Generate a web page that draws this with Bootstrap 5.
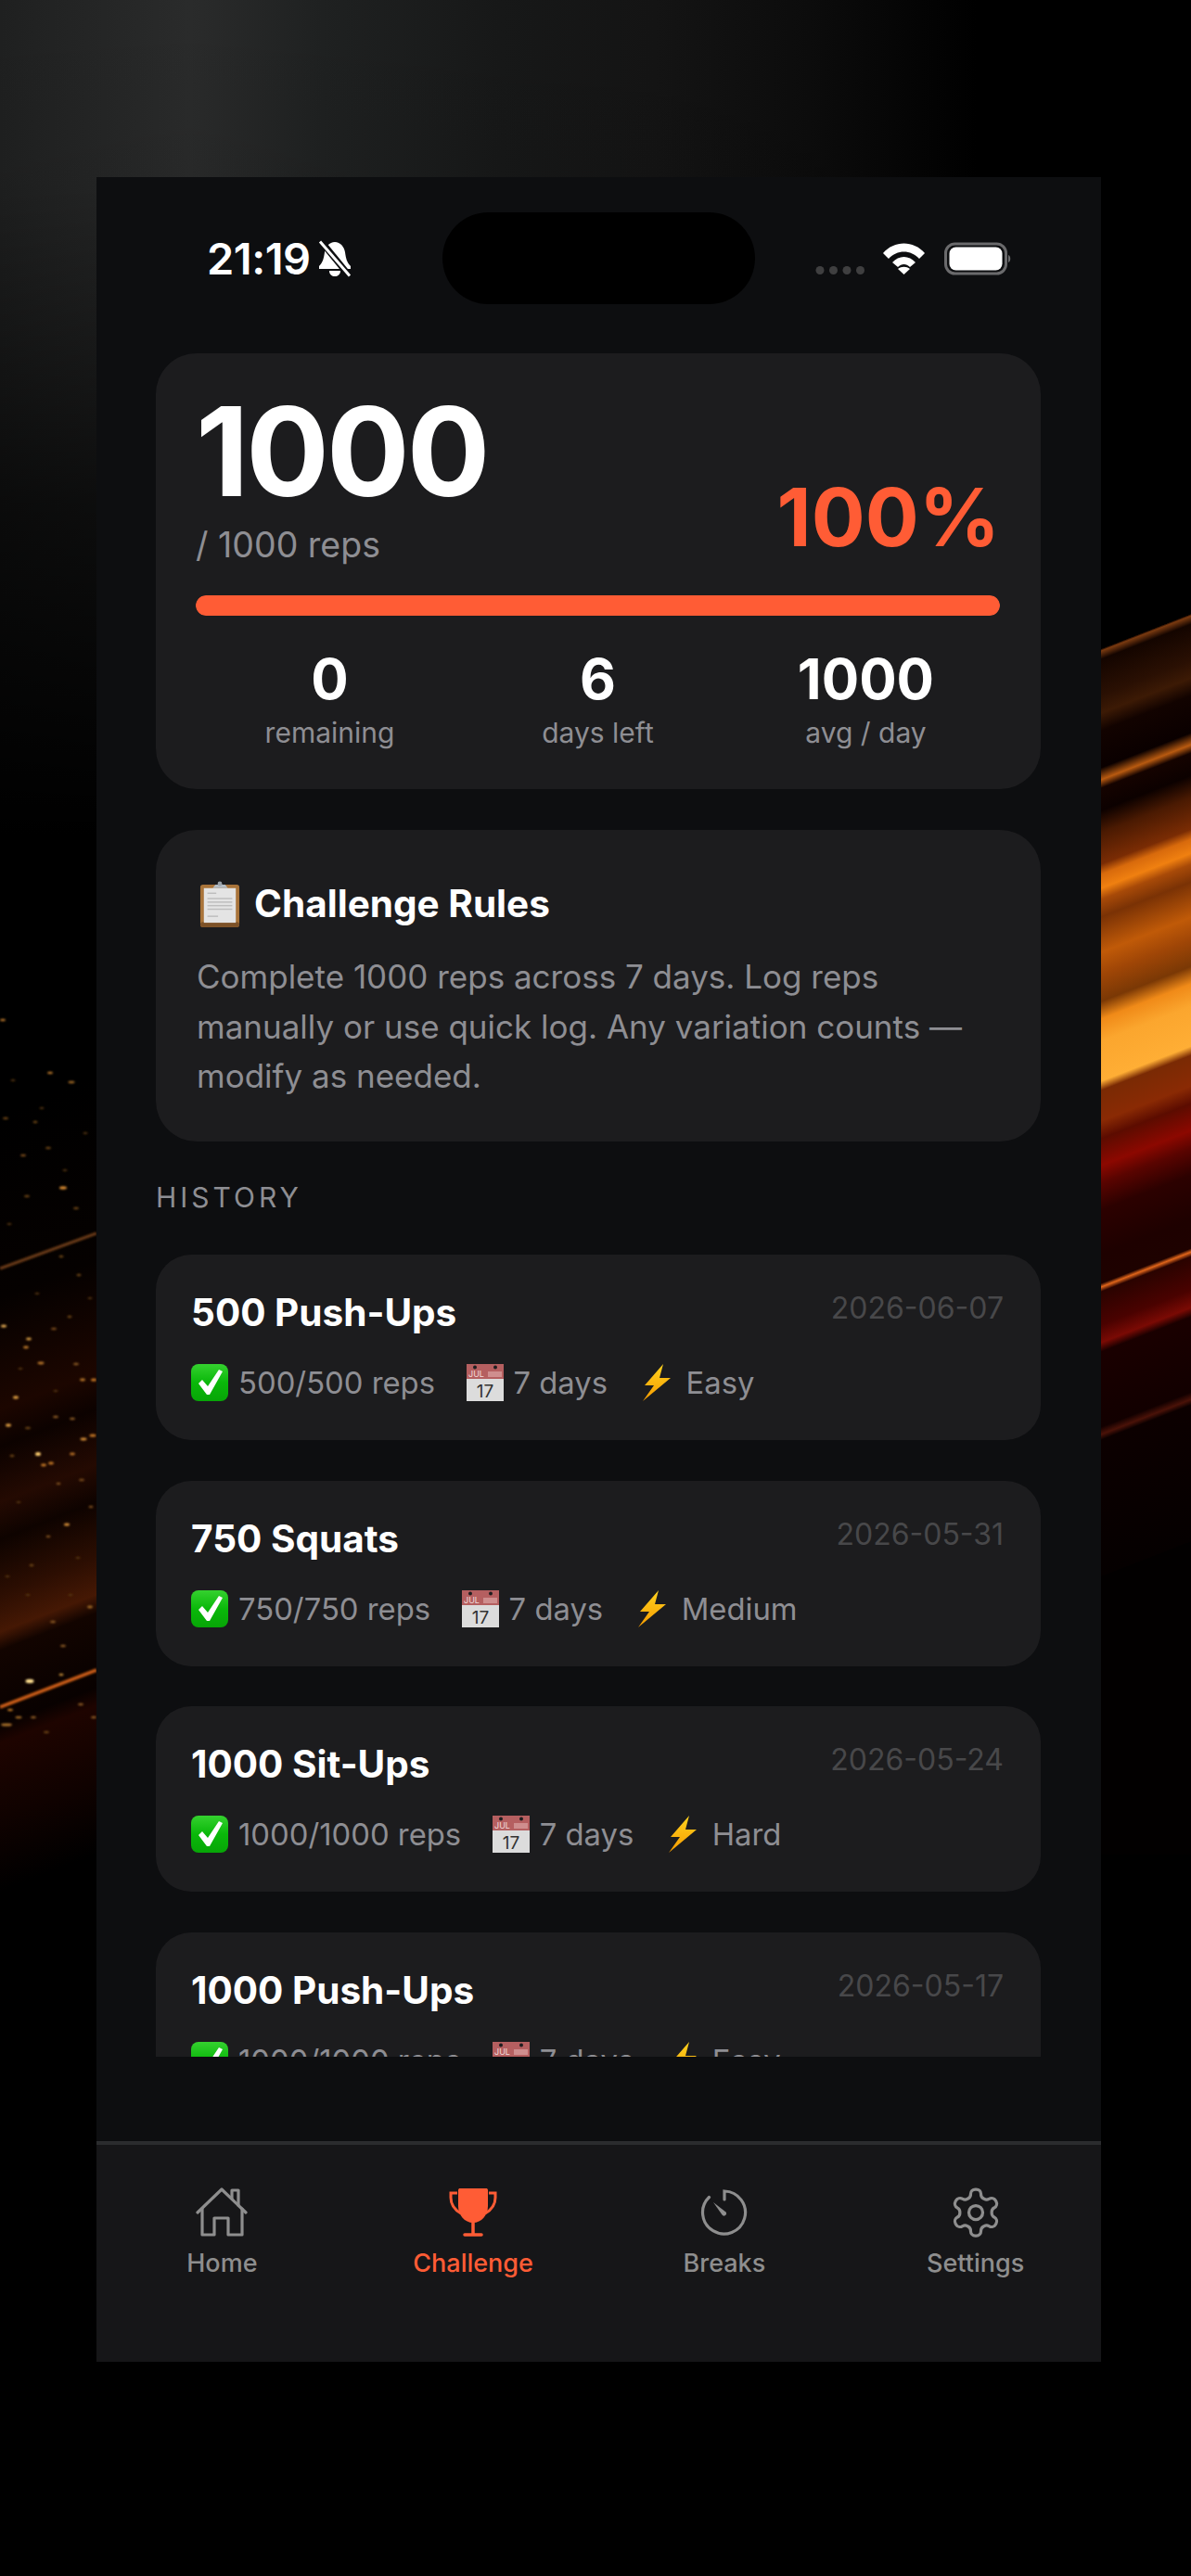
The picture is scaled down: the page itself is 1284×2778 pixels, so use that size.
<!doctype html>
<html lang="en">
<head>
<meta charset="utf-8">
<title>Challenge</title>
<link href="https://cdn.jsdelivr.net/npm/bootstrap@5.3.0/dist/css/bootstrap.min.css" rel="stylesheet">
<style>
html,body{margin:0;height:2778px;overflow:hidden;background:#000;}
body{font-family:"Inter","Liberation Sans",sans-serif;color:#fff;position:relative;}
.backdrop{position:absolute;left:0;top:0;width:1284px;height:2778px;z-index:0;}
.phone{position:relative;z-index:1;margin:191px 0 0 104px;width:1083px;height:2356px;background:#0d0e10;}
.statusbar{height:190px;padding:38px 95px 0 95px;align-items:flex-start;}
.status-side{flex:1 1 0;height:99px;}
.clock{font-size:47px;font-weight:600;line-height:1;letter-spacing:-.5px;margin-left:24px;}
.island{width:337px;height:99px;border-radius:50px;background:#000;flex:none;}
.scroller{height:1837px;overflow:hidden;padding:0 65px 0 64px;}
.tile{background:#1c1c1e;border:0;color:#fff;}
.tile-hero{height:470px;border-radius:44px;padding:39px 44px 0 43px;margin-bottom:44px;}
.tile-rules{height:336px;border-radius:44px;padding:44px 44px 0 44px;}
.tile-item{height:200px;border-radius:38px;padding:0 40px 0 38px;margin-bottom:43.5px;}
.big-count{font-size:133px;font-weight:700;line-height:1;letter-spacing:-3px;}
.count-sub{font-size:37.500px;line-height:1;color:#8e8e93;margin-top:16px;}
.pct{font-size:86px;font-weight:700;line-height:1;color:#ff5c35;margin-bottom:6px;}
.bar-track{height:22px;border-radius:11px;background:#2c2c2e;margin-top:35px;}
.bar-fill{background:#ff5c35;border-radius:11px;}
.stat-num{font-size:60px;font-weight:700;line-height:1;margin-top:38px;}
.stat-lab{font-size:30px;line-height:1;color:#8e8e93;margin-top:13px;}
.rules-title{font-size:40.500px;font-weight:700;line-height:72px;gap:15px;}
.rules-title svg{margin-left:3px;}
.rules-body{font-size:35px;line-height:53.600px;color:#8e8e93;margin:16px 0 0;}
.hist-label{font-size:30px;line-height:36px;letter-spacing:4px;color:#8e8e93;margin:42px 0 44px;}
.item-title{font-size:40.500px;font-weight:700;line-height:1;margin-top:43px;}
.item-date{font-size:32px;line-height:1;color:#48484a;margin-top:42px;}
.item-meta{font-size:32.800px;line-height:40px;color:#8e8e93;gap:33.500px;margin-top:34.500px;}
.emo{width:40px;height:40px;margin-right:11px;flex:none;display:block;}
.tabbar{height:238px;background:#161618;border-top:4px solid #2b2c2e;padding-top:43px;}
.tab-lab{font-size:27px;line-height:1;margin-top:11px;color:#8e8e8e;font-weight:500;}
.tab-on .tab-lab{color:#ff5c35;}
.tab-ic{width:60px;height:60px;display:block;margin:0 auto;}
</style>
</head>
<body>
<svg class="backdrop" viewBox="0 0 1284 2778" aria-hidden="true">
  <defs>
    <linearGradient id="topH" x1="0" x2="1284" y1="0" y2="0" gradientUnits="userSpaceOnUse">
      <stop offset="0" stop-color="#1f2020"/><stop offset=".16" stop-color="#2a2b2b"/><stop offset=".27" stop-color="#1f2121"/><stop offset=".42" stop-color="#171818"/><stop offset=".55" stop-color="#141414"/><stop offset=".68" stop-color="#0c0c0c"/><stop offset=".82" stop-color="#000"/>
    </linearGradient>
    <linearGradient id="topV" x1="0" x2="0" y1="0" y2="1">
      <stop offset="0" stop-color="#000" stop-opacity="0"/><stop offset=".22" stop-color="#000" stop-opacity=".05"/><stop offset=".6" stop-color="#000" stop-opacity=".65"/><stop offset="1" stop-color="#000" stop-opacity="1"/>
    </linearGradient>
    <linearGradient id="rightBands" gradientUnits="userSpaceOnUse" x1="1187" y1="700" x2="1525.5" y2="1568">
      <stop offset="-.2" stop-color="#000"/><stop offset="-.12" stop-color="#080100"/>
      <stop offset="0" stop-color="#180700"/><stop offset=".002" stop-color="#7a3a10"/><stop offset=".011" stop-color="#140500"/>
      <stop offset=".05" stop-color="#2a1003"/><stop offset=".069" stop-color="#3c1a05"/><stop offset=".088" stop-color="#120300"/>
      <stop offset=".128" stop-color="#0a0000"/><stop offset=".141" stop-color="#b85a10"/><stop offset=".15" stop-color="#150300"/>
      <stop offset=".174" stop-color="#0c0100"/><stop offset=".198" stop-color="#4a1a02"/><stop offset=".232" stop-color="#7a2c04"/>
      <stop offset=".243" stop-color="#d86a0c"/><stop offset=".258" stop-color="#f08010"/><stop offset=".27" stop-color="#a84a08"/>
      <stop offset=".289" stop-color="#7a3205"/><stop offset=".327" stop-color="#c05a08"/><stop offset=".351" stop-color="#a04606"/>
      <stop offset=".38" stop-color="#7a3805"/><stop offset=".399" stop-color="#f08a18"/><stop offset=".423" stop-color="#fba62e"/>
      <stop offset=".466" stop-color="#ffae35"/><stop offset=".476" stop-color="#7a2a04"/><stop offset=".509" stop-color="#8a2a04"/>
      <stop offset=".528" stop-color="#5c0c00"/><stop offset=".557" stop-color="#8c0800"/><stop offset=".576" stop-color="#5a0400"/>
      <stop offset=".605" stop-color="#2c0100"/><stop offset=".653" stop-color="#1e0100"/><stop offset=".684" stop-color="#1e0200"/>
      <stop offset=".688" stop-color="#e0651a"/><stop offset=".693" stop-color="#2a0300"/><stop offset=".729" stop-color="#4a0200"/>
      <stop offset=".748" stop-color="#7a0a04"/><stop offset=".758" stop-color="#1a0000"/><stop offset=".839" stop-color="#120000"/>
      <stop offset=".847" stop-color="#4a1208"/><stop offset=".853" stop-color="#0c0000"/><stop offset="1.1" stop-color="#050000"/><stop offset="1.3" stop-color="#020000"/>
    </linearGradient>
    <linearGradient id="leftBands" gradientUnits="userSpaceOnUse" x1="0" y1="1200" x2="338.500" y2="2068">
      <stop offset="0" stop-color="#000"/><stop offset=".2" stop-color="#050100"/><stop offset=".32" stop-color="#1c0600"/><stop offset=".36" stop-color="#0c0200"/>
      <stop offset=".42" stop-color="#240a02"/><stop offset=".46" stop-color="#0e0300"/><stop offset=".52" stop-color="#2c0e02"/>
      <stop offset=".56" stop-color="#451804"/><stop offset=".58" stop-color="#120400"/><stop offset=".66" stop-color="#080100"/>
      <stop offset=".68" stop-color="#1e0400"/><stop offset=".76" stop-color="#100200"/><stop offset=".84" stop-color="#000"/>
    </linearGradient>
    <filter id="soft" x="-20%" y="-20%" width="140%" height="140%"><feGaussianBlur stdDeviation=".9"/></filter>
  </defs>
  <rect x="0" y="0" width="1284" height="900" fill="url(#topH)"/>
  <rect x="0" y="0" width="1284" height="900" fill="url(#topV)"/>
  <rect x="1187" y="300" width="97" height="1700" fill="url(#rightBands)"/>
  <rect x="0" y="1100" width="104" height="1000" fill="url(#leftBands)"/>
  <g filter="url(#soft)">
    <line x1="0" y1="1368" x2="104" y2="1330" stroke="#6a3a18" stroke-width="3"/>
    <line x1="0" y1="1841" x2="104" y2="1801" stroke="#c85c16" stroke-width="3.500"/>
    <g fill="#b8762c">
      <ellipse cx="3" cy="1100" rx="3" ry="1.300"/><ellipse cx="54" cy="1157" rx="3" ry="1.300"/><ellipse cx="77" cy="1167" rx="3.500" ry="1.300" fill="#a06a28"/>
      <ellipse cx="68" cy="1281" rx="4" ry="1.700" fill="#d88a30"/><ellipse cx="29" cy="1290" rx="3" ry="1.300" fill="#6a4418"/><ellipse cx="52" cy="1238" rx="3" ry="1.300" fill="#6a4418"/>
      <ellipse cx="6" cy="1206" rx="3" ry="1.300" fill="#6a4418"/><ellipse cx="38" cy="1210" rx="2.500" ry="1.300" fill="#6a4418"/><ellipse cx="25" cy="1246" rx="3" ry="1.300" fill="#7a4c1c"/>
      <ellipse cx="82" cy="1303" rx="3" ry="1.300" fill="#6a4418"/><ellipse cx="4" cy="1430" rx="3" ry="1.500" fill="#e0a850"/><ellipse cx="31" cy="1444" rx="3" ry="1.400" fill="#d09840"/>
      <ellipse cx="28" cy="1453" rx="3" ry="1.400"/><ellipse cx="44" cy="1470" rx="3.500" ry="1.400"/><ellipse cx="17" cy="1507" rx="3" ry="1.700" fill="#d89a40"/>
      <ellipse cx="9" cy="1537" rx="3" ry="1.700" fill="#d89a40"/><ellipse cx="41" cy="1568" rx="3" ry="2" fill="#ffcf70"/><ellipse cx="47" cy="1580" rx="3" ry="1.400" fill="#c87a28"/>
      <ellipse cx="55" cy="1578" rx="3" ry="1.400" fill="#c87a28"/><ellipse cx="78" cy="1568" rx="3" ry="1.400" fill="#b87028"/><ellipse cx="90" cy="1552" rx="3.500" ry="1.400" fill="#d89038"/>
      <ellipse cx="101" cy="1488" rx="3" ry="1.500" fill="#c87a28"/><ellipse cx="89" cy="1488" rx="3" ry="1.400"/><ellipse cx="82" cy="1471" rx="3" ry="1.200" fill="#8a5a20"/>
      <ellipse cx="72" cy="1644" rx="3" ry="1.500" fill="#d89038"/><ellipse cx="52" cy="1657" rx="2.500" ry="1.200" fill="#7a4c1c"/><ellipse cx="34" cy="1688" rx="2.500" ry="1.200" fill="#6a4418"/>
      <ellipse cx="97" cy="1733" rx="3" ry="1.400" fill="#a06a28"/><ellipse cx="57" cy="1749" rx="3" ry="1.300" fill="#8a5a20"/><ellipse cx="68" cy="1775" rx="3" ry="1.300" fill="#8a5a20"/>
      <ellipse cx="32" cy="1813" rx="4.500" ry="2.200" fill="#ffe090"/><ellipse cx="66" cy="1806" rx="2.500" ry="1.300" fill="#c08a38"/><ellipse cx="11" cy="1844" rx="3" ry="1.300" fill="#c07a28"/>
      <ellipse cx="20" cy="1852" rx="3.500" ry="1.300" fill="#a06a28"/><ellipse cx="7" cy="1860" rx="6" ry="1.600" fill="#a8702a"/><ellipse cx="36" cy="1852" rx="3" ry="1.200" fill="#8a5a20"/>
      <ellipse cx="87" cy="1838" rx="3" ry="1.200" fill="#8a5a20"/><ellipse cx="101" cy="1852" rx="3" ry="1.200" fill="#8a5a20"/><ellipse cx="50" cy="1868" rx="3" ry="1.200" fill="#6a4418"/>
      <ellipse cx="100" cy="1548" rx="3.500" ry="1.500" fill="#c87a28"/><ellipse cx="78" cy="1530" rx="3" ry="1.300" fill="#8a5a20"/><ellipse cx="60" cy="1528" rx="3" ry="1.200" fill="#8a5a20"/>
      <ellipse cx="30" cy="1540" rx="3" ry="1.200" fill="#6a4418"/><ellipse cx="13" cy="1570" rx="2.500" ry="1.200" fill="#6a4418"/><ellipse cx="98" cy="1625" rx="2.500" ry="1.200" fill="#7a4c1c"/>
      <ellipse cx="63" cy="1600" rx="2.500" ry="1.200" fill="#7a4c1c"/><ellipse cx="88" cy="1596" rx="3" ry="1.200" fill="#7a4c1c"/><ellipse cx="75" cy="1420" rx="2.500" ry="1.200" fill="#6a4418"/>
      <ellipse cx="58" cy="1433" rx="3" ry="1.300" fill="#7a4c1c"/><ellipse cx="66" cy="1355" rx="2.500" ry="1.200" fill="#6a4418"/><ellipse cx="85" cy="1375" rx="2.500" ry="1.200" fill="#6a4418"/>
      <ellipse cx="14" cy="1165" rx="2.500" ry="1.100" fill="#5a3a14"/><ellipse cx="92" cy="1222" rx="2.500" ry="1.100" fill="#5a3a14"/><ellipse cx="45" cy="1195" rx="2.500" ry="1.100" fill="#5a3a14"/>
      <ellipse cx="70" cy="1262" rx="2.500" ry="1.100" fill="#5a3a14"/><ellipse cx="10" cy="1320" rx="2.500" ry="1.100" fill="#5a3a14"/><ellipse cx="40" cy="1395" rx="2.500" ry="1.100" fill="#5a3a14"/>
      <ellipse cx="97" cy="1400" rx="2.500" ry="1.100" fill="#5a3a14"/><ellipse cx="22" cy="1476" rx="2.500" ry="1.100" fill="#5a3a14"/><ellipse cx="60" cy="1500" rx="2.500" ry="1.100" fill="#5a3a14"/>
      <ellipse cx="20" cy="1620" rx="2.500" ry="1.100" fill="#5a3a14"/><ellipse cx="84" cy="1680" rx="2.500" ry="1.100" fill="#5a3a14"/><ellipse cx="30" cy="1720" rx="2.500" ry="1.100" fill="#5a3a14"/>
      <ellipse cx="76" cy="1720" rx="2.500" ry="1.100" fill="#5a3a14"/><ellipse cx="8" cy="1700" rx="2.500" ry="1.100" fill="#5a3a14"/>
    </g>
  </g>
</svg>

<main class="phone d-flex flex-column">
  <header class="statusbar d-flex">
    <div class="status-side d-flex align-items-center gap-2">
      <span class="clock">21:19</span>
      <svg width="36" height="40" viewBox="0 0 36 40" aria-hidden="true">
        <path d="M18 2c6 0 10 5 11 11 1 7 2 11 6 15v3H1v-3c4-4 5-8 6-15C8 7 12 2 18 2zM12 33h12c0 4-3 6-6 6s-6-2-6-6z" fill="#fff"/>
        <path d="M3 1l31 38" stroke="#0d0e10" stroke-width="7"/>
        <path d="M2 1.500l32 37" stroke="#fff" stroke-width="3"/>
      </svg>
    </div>
    <div class="island"></div>
    <div class="status-side d-flex align-items-center justify-content-end">
      <svg width="213" height="40" viewBox="0 0 213 40" aria-hidden="true">
        <g fill="#3f3f40"><circle cx="5" cy="32.500" r="4.500"/><circle cx="19.500" cy="32.500" r="4.500"/><circle cx="34" cy="32.500" r="4.500"/><circle cx="48.500" cy="32.500" r="4.500"/></g>
        <path d="M73 14C85 0 106 0 118 14l-6 6C103 10 88 10 79 20zM83 24C90 16 101 16 108 24l-6 5C98 25 93 25 89 29zM95.500 37L89 31C93 28 98 28 102 31z" fill="#fff"/>
        <rect x="140.500" y="4" width="65" height="32" rx="10" fill="none" stroke="#6a6a6c" stroke-width="3"/>
        <rect x="144.500" y="7.500" width="57" height="25" rx="7" fill="#fff"/>
        <path d="M208 16c3 1 3 7 0 8z" fill="#6a6a6c"/>
      </svg>
    </div>
  </header>

  <div class="scroller">
    <section class="card tile tile-hero">
      <div class="d-flex justify-content-between align-items-end">
        <div>
          <div class="big-count">1000</div>
          <div class="count-sub">/ 1000 reps</div>
        </div>
        <div class="pct">100%</div>
      </div>
      <div class="progress bar-track"><div class="progress-bar bar-fill w-100"></div></div>
      <div class="row g-0 text-center">
        <div class="col-4"><div class="stat-num">0</div><div class="stat-lab">remaining</div></div>
        <div class="col-4"><div class="stat-num">6</div><div class="stat-lab">days left</div></div>
        <div class="col-4"><div class="stat-num">1000</div><div class="stat-lab">avg / day</div></div>
      </div>
    </section>

    <section class="card tile tile-rules">
      <h2 class="rules-title d-flex align-items-center m-0">
        <svg width="44" height="50" viewBox="0 0 46 52" aria-hidden="true">
          <rect x="1" y="4" width="44" height="48" rx="3" fill="#a9743a"/>
          <rect x="1" y="46" width="44" height="6" rx="3" fill="#7d5228"/>
          <rect x="5" y="8" width="36" height="39" fill="#e4e4e4"/>
          <g fill="#bdbdbd"><rect x="9" y="13" width="10" height="1.500"/><rect x="9" y="19" width="28" height="1.500"/><rect x="9" y="23" width="28" height="1.500"/><rect x="9" y="27" width="28" height="1.500"/><rect x="9" y="31" width="28" height="1.500"/><rect x="9" y="39" width="12" height="1.500"/></g>
          <path d="M15 8l3-4h4a2.500 2.500 0 0 1 4 0h3l3 4z" fill="#b4bcc4"/>
          <circle cx="23" cy="3" r="2.500" fill="#9aa2aa"/>
        </svg>
        <span>Challenge Rules</span>
      </h2>
      <p class="rules-body">Complete 1000 reps across 7 days. Log reps manually or use quick log. Any variation counts — modify as needed.</p>
    </section>

    <div class="hist-label">HISTORY</div>

    <article class="card tile tile-item">
      <div class="d-flex justify-content-between"><div class="item-title">500 Push-Ups</div><div class="item-date">2026-06-07</div></div>
      <div class="item-meta d-flex">
        <span class="d-flex"><svg class="emo" viewBox="0 0 40 40" aria-hidden="true"><use href="#e-check"/></svg>500/500 reps</span>
        <span class="d-flex"><svg class="emo" viewBox="0 0 40 40" aria-hidden="true"><use href="#e-cal"/></svg>7 days</span>
        <span class="d-flex"><svg class="emo" viewBox="0 0 40 40" aria-hidden="true"><use href="#e-bolt"/></svg>Easy</span>
      </div>
    </article>
    <article class="card tile tile-item">
      <div class="d-flex justify-content-between"><div class="item-title">750 Squats</div><div class="item-date">2026-05-31</div></div>
      <div class="item-meta d-flex">
        <span class="d-flex"><svg class="emo" viewBox="0 0 40 40" aria-hidden="true"><use href="#e-check"/></svg>750/750 reps</span>
        <span class="d-flex"><svg class="emo" viewBox="0 0 40 40" aria-hidden="true"><use href="#e-cal"/></svg>7 days</span>
        <span class="d-flex"><svg class="emo" viewBox="0 0 40 40" aria-hidden="true"><use href="#e-bolt"/></svg>Medium</span>
      </div>
    </article>
    <article class="card tile tile-item">
      <div class="d-flex justify-content-between"><div class="item-title">1000 Sit-Ups</div><div class="item-date">2026-05-24</div></div>
      <div class="item-meta d-flex">
        <span class="d-flex"><svg class="emo" viewBox="0 0 40 40" aria-hidden="true"><use href="#e-check"/></svg>1000/1000 reps</span>
        <span class="d-flex"><svg class="emo" viewBox="0 0 40 40" aria-hidden="true"><use href="#e-cal"/></svg>7 days</span>
        <span class="d-flex"><svg class="emo" viewBox="0 0 40 40" aria-hidden="true"><use href="#e-bolt"/></svg>Hard</span>
      </div>
    </article>
    <article class="card tile tile-item">
      <div class="d-flex justify-content-between"><div class="item-title">1000 Push-Ups</div><div class="item-date">2026-05-17</div></div>
      <div class="item-meta d-flex">
        <span class="d-flex"><svg class="emo" viewBox="0 0 40 40" aria-hidden="true"><use href="#e-check"/></svg>1000/1000 reps</span>
        <span class="d-flex"><svg class="emo" viewBox="0 0 40 40" aria-hidden="true"><use href="#e-cal"/></svg>7 days</span>
        <span class="d-flex"><svg class="emo" viewBox="0 0 40 40" aria-hidden="true"><use href="#e-bolt"/></svg>Easy</span>
      </div>
    </article>
  </div>

  <div class="flex-grow-1"></div>

  <nav class="tabbar row g-0 text-center">
    <div class="col-3">
      <svg class="tab-ic" viewBox="0 0 60 60" fill="none" stroke="#8e8e8e" stroke-width="3.200" stroke-linecap="round" stroke-linejoin="round" aria-hidden="true">
        <path d="M4 30L30 5l26 25"/><path d="M41 15V6h7v16"/><path d="M9 26v28h13V36h15v18h15V26"/>
      </svg>
      <div class="tab-lab">Home</div>
    </div>
    <div class="col-3 tab-on">
      <svg class="tab-ic" viewBox="0 0 60 60" aria-hidden="true">
        <path d="M14 6c0-1.500 1-2 2-2h28c1 0 2 .5 2 2v17c0 10-7 18-16 18S14 33 14 23z" fill="#ff5c35"/>
        <path d="M13 9H6v5c0 7 4 13 11 17M47 9h7v5c0 7-4 13-11 17" fill="none" stroke="#ff5c35" stroke-width="3"/>
        <path d="M30 40v14M21 54h18" fill="none" stroke="#ff5c35" stroke-width="3.500" stroke-linecap="round"/>
      </svg>
      <div class="tab-lab">Challenge</div>
    </div>
    <div class="col-3">
      <svg class="tab-ic" viewBox="0 0 60 60" fill="none" stroke="#8e8e8e" stroke-width="3.200" stroke-linecap="round" aria-hidden="true">
        <path d="M13.500 13.500A23 23 0 1 0 30 7v9"/>
        <path d="M18 19l9.500 13.500a2.500 2.500 0 0 0 4-3z" fill="#8e8e8e" stroke="none"/>
      </svg>
      <div class="tab-lab">Breaks</div>
    </div>
    <div class="col-3">
      <svg class="tab-ic" viewBox="0 0 24 24" fill="none" stroke="#8e8e8e" stroke-width="1.300" stroke-linecap="round" stroke-linejoin="round" aria-hidden="true">
        <path d="M12.220 2h-.44a2 2 0 0 0-2 2v.18a2 2 0 0 1-1 1.730l-.43.25a2 2 0 0 1-2 0l-.15-.08a2 2 0 0 0-2.730.73l-.22.38a2 2 0 0 0 .73 2.730l.15.1a2 2 0 0 1 1 1.720v.51a2 2 0 0 1-1 1.740l-.15.09a2 2 0 0 0-.73 2.730l.22.38a2 2 0 0 0 2.730.73l.15-.08a2 2 0 0 1 2 0l.43.25a2 2 0 0 1 1 1.730V20a2 2 0 0 0 2 2h.44a2 2 0 0 0 2-2v-.18a2 2 0 0 1 1-1.730l.43-.25a2 2 0 0 1 2 0l.15.08a2 2 0 0 0 2.730-.73l.22-.39a2 2 0 0 0-.73-2.730l-.15-.08a2 2 0 0 1-1-1.740v-.5a2 2 0 0 1 1-1.740l.15-.09a2 2 0 0 0 .73-2.730l-.22-.38a2 2 0 0 0-2.730-.73l-.15.08a2 2 0 0 1-2 0l-.43-.25a2 2 0 0 1-1-1.730V4a2 2 0 0 0-2-2z"/>
        <circle cx="12" cy="12" r="3"/>
      </svg>
      <div class="tab-lab">Settings</div>
    </div>
  </nav>
</main>

<svg width="0" height="0" class="position-absolute" aria-hidden="true">
  <defs>
    <linearGradient id="gGreen" x1="0" x2="0" y1="0" y2="1"><stop offset="0" stop-color="#35d12f"/><stop offset=".5" stop-color="#0ab80a"/><stop offset="1" stop-color="#07a507"/></linearGradient>
    <linearGradient id="gBolt" x1="0" x2="0" y1="0" y2="1"><stop offset="0" stop-color="#ffd21f"/><stop offset="1" stop-color="#f59b00"/></linearGradient>
    <symbol id="e-check" viewBox="0 0 40 40">
      <rect x="0" y="0" width="40" height="40" rx="8" fill="url(#gGreen)"/>
      <path d="M8 21l4-4 6 7L30 6l4 2-14 25h-3z" fill="#fff"/>
    </symbol>
    <symbol id="e-cal" viewBox="0 0 40 40">
      <rect x="0" y="0" width="40" height="40" fill="#dcdcdc"/>
      <rect x="0" y="0" width="40" height="16" fill="#b55f60"/>
      <circle cx="9" cy="3.500" r="2" fill="#1d1d1f"/><circle cx="31" cy="3.500" r="2" fill="#1d1d1f"/>
      <text x="2" y="14" font-size="9" fill="#f2dcdc" font-family="Inter,sans-serif">JUL</text>
      <g fill="#cf8e8e"><rect x="23" y="8" width="15" height="6"/></g>
      <text x="20" y="36" font-size="19" text-anchor="middle" fill="#333" font-family="Inter,sans-serif">17</text>
    </symbol>
    <symbol id="e-bolt" viewBox="0 0 40 40">
      <path d="M26 0L6 23h10L4 40 34 15H22z" fill="url(#gBolt)"/>
    </symbol>
  </defs>
</svg>
<script src="https://cdn.jsdelivr.net/npm/bootstrap@5.3.0/dist/js/bootstrap.bundle.min.js"></script>
</body>
</html>
